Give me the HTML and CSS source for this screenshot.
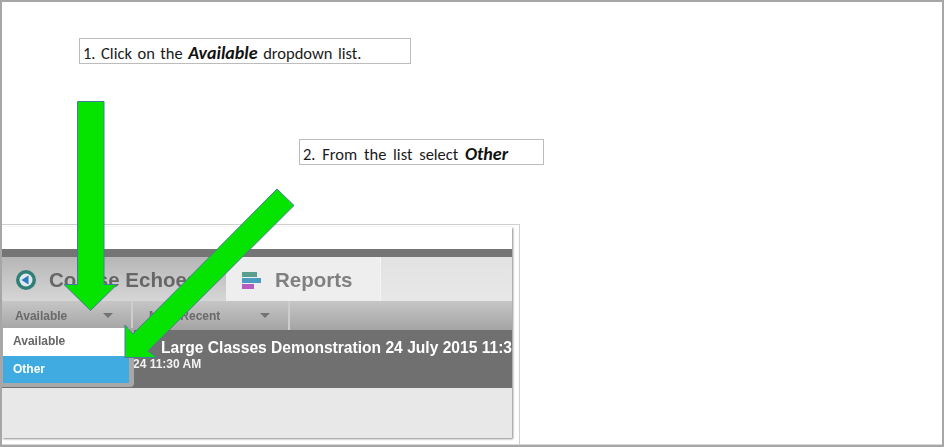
FILE: index.html
```html
<!DOCTYPE html>
<html lang="en">
<head>
<meta charset="utf-8">
<title>Select Other</title>
<link rel="stylesheet" href="styles.css">
</head>
<body>
<main class="page">
  <p class="note note-one">1. Click on the <b>Available</b> dropdown list.</p>
  <p class="note note-two">2. From the list select <b>Other</b></p>
  <section class="shot">
    <div class="panel">
      <div class="topbar"></div>
      <div class="tabs">
        <div class="tab tab-active">
          <svg class="tab-icon" width="22" height="22" viewBox="0 0 22 22"><circle cx="11" cy="11" r="10" fill="#2f7f78"/><circle cx="11" cy="11" r="6.5" fill="#dfe8ea"/><path d="M6.5 11 13.5 6.5V15.5Z" fill="#2b78c4"/></svg>
          <span>Course Echoes</span>
        </div>
        <div class="tab tab-reports">
          <svg class="tab-icon" width="20" height="17" viewBox="0 0 20 17"><rect x="1" y="0" width="15" height="5" fill="#5a9e8e"/><rect x="1" y="6" width="19" height="5" fill="#4a9cc2"/><rect x="1" y="12" width="12" height="5" fill="#b45cc0"/></svg>
          <span>Reports</span>
        </div>
      </div>
      <div class="toolbar">
        <div class="filter filter-status"><span>Available</span><i class="caret"></i></div>
        <div class="filter filter-sort"><span>Most Recent</span><i class="caret"></i></div>
      </div>
      <div class="row">
        <div class="row-title">Large Classes Demonstration 24 July 2015 11:3</div>
        <div class="row-sub">24 11:30 AM</div>
      </div>
      <div class="empty"></div>
      <div class="menu">
        <div class="menu-item">Available</div>
        <div class="menu-item menu-selected">Other</div>
      </div>
    </div>
  </section>
  <svg class="arrows" width="944" height="447" viewBox="0 0 944 447">
    <polygon class="arrow" points="77.5,101.5 104,101.5 104,284.5 117,284.5 90.5,310.5 64,284.5 77.5,284.5"/>
    <polygon class="arrow" points="277,189 294,205.5 148,351 157,357.5 125,357.5 125,325 133,334"/>
  </svg>
</main>
</body>
</html>
```
FILE: styles.css
```css
* { box-sizing: border-box; }
html, body { margin: 0; padding: 0; background: #fff; }
.page {
  position: relative;
  width: 944px;
  height: 447px;
  overflow: hidden;
  border: 2px solid #a6a6a6;
  box-shadow: inset 0 -1px 0 #d8d8d8;
  display: flex;
  flex-direction: column;
  align-items: flex-start;
}
.note {
  margin: 0;
  height: 26px;
  padding: 0 0 0 3px;
  border: 1px solid #bcbcbc;
  font: 16.5px/28px Carlito, Lato, sans-serif;
  color: #1a1a1a;
  white-space: nowrap;
}
.note b { font-size: 18px; font-style: italic; font-weight: 700; color: #111; }
.note-one { margin: 36px 0 0 77px; width: 332px; word-spacing: 1.8px; }
.note-two { margin: 75px 0 0 297px; width: 245px; word-spacing: 3px; }
.shot {
  margin-top: 59px;
  width: 518px;
  height: 222px;
  padding: 2px 6px 0 0;
  border-top: 1px solid #cfcfcf;
  border-right: 1px solid #cfcfcf;
  flex: none;
}
.panel {
  position: relative;
  width: 510px;
  height: 211px;
  background: #fff;
  box-shadow: 1px 1px 2px #8a8a8a;
  font-family: "Liberation Sans", Arial, sans-serif;
  font-weight: 700;
  filter: blur(0.6px);
  display: flex;
  flex-direction: column;
  overflow: visible;
}
.topbar { margin-top: 22px; height: 8px; background: #757575; flex: none; }
.tabs {
  display: flex;
  height: 44px;
  flex: none;
  background: linear-gradient(#e2e2e2, #e8e8e8);
  font-size: 20.5px;
}
.tab { display: flex; align-items: center; height: 100%; padding-top: 2px; }
.tab-active {
  width: 224px;
  padding-left: 13px;
  gap: 12px;
  color: #666;
  background: linear-gradient(#b6b6b6, #d6d6d6);
}
.tab-reports {
  width: 155px;
  padding-left: 15px;
  gap: 14px;
  color: #808080;
  background: #eeeeee;
  border-right: 1px solid #f4f4f4;
}
.toolbar {
  display: flex;
  height: 29px;
  flex: none;
  background: linear-gradient(#c6c6c6, #a4a4a4);
  font-size: 12px;
  color: #6a6a6a;
}
.filter {
  display: flex;
  align-items: center;
  justify-content: space-between;
  height: 100%;
  border-right: 2px solid #cdcdcd;
}
.filter-status { width: 131px; padding: 0 18px 0 13px; }
.filter-sort { width: 157px; padding: 0 18px 0 16px; }
.caret {
  width: 0;
  height: 0;
  border-left: 5px solid transparent;
  border-right: 5px solid transparent;
  border-top: 5px solid #737373;
}
.row {
  height: 58px;
  flex: none;
  overflow: hidden;
  background: #707070;
  color: #fff;
  padding-top: 9px;
  white-space: nowrap;
}
.row-title { padding-left: 159px; font-size: 15.6px; line-height: 18px; }
.row-sub { padding-left: 131px; font-size: 12px; line-height: 15px; color: #f2f2f2; }
.empty { flex: 1; background: #e8e8e8; }
.menu {
  position: absolute;
  left: 0;
  top: 101px;
  width: 132px;
  height: 59px;
  padding: 0 5px 4px 1px;
  background: #a8a8a8;
  border-radius: 0 0 4px 0;
  font-size: 12px;
}
.menu-item { height: 27.5px; padding-left: 10px; line-height: 27px; color: #666; background: #fff; }
.menu-selected { color: #fff; background: #3fabe0; }
.arrows { position: absolute; left: -2px; top: -2px; pointer-events: none; }
.arrow { fill: #05e400; stroke: #4a7a9a; stroke-width: 1; }
```
